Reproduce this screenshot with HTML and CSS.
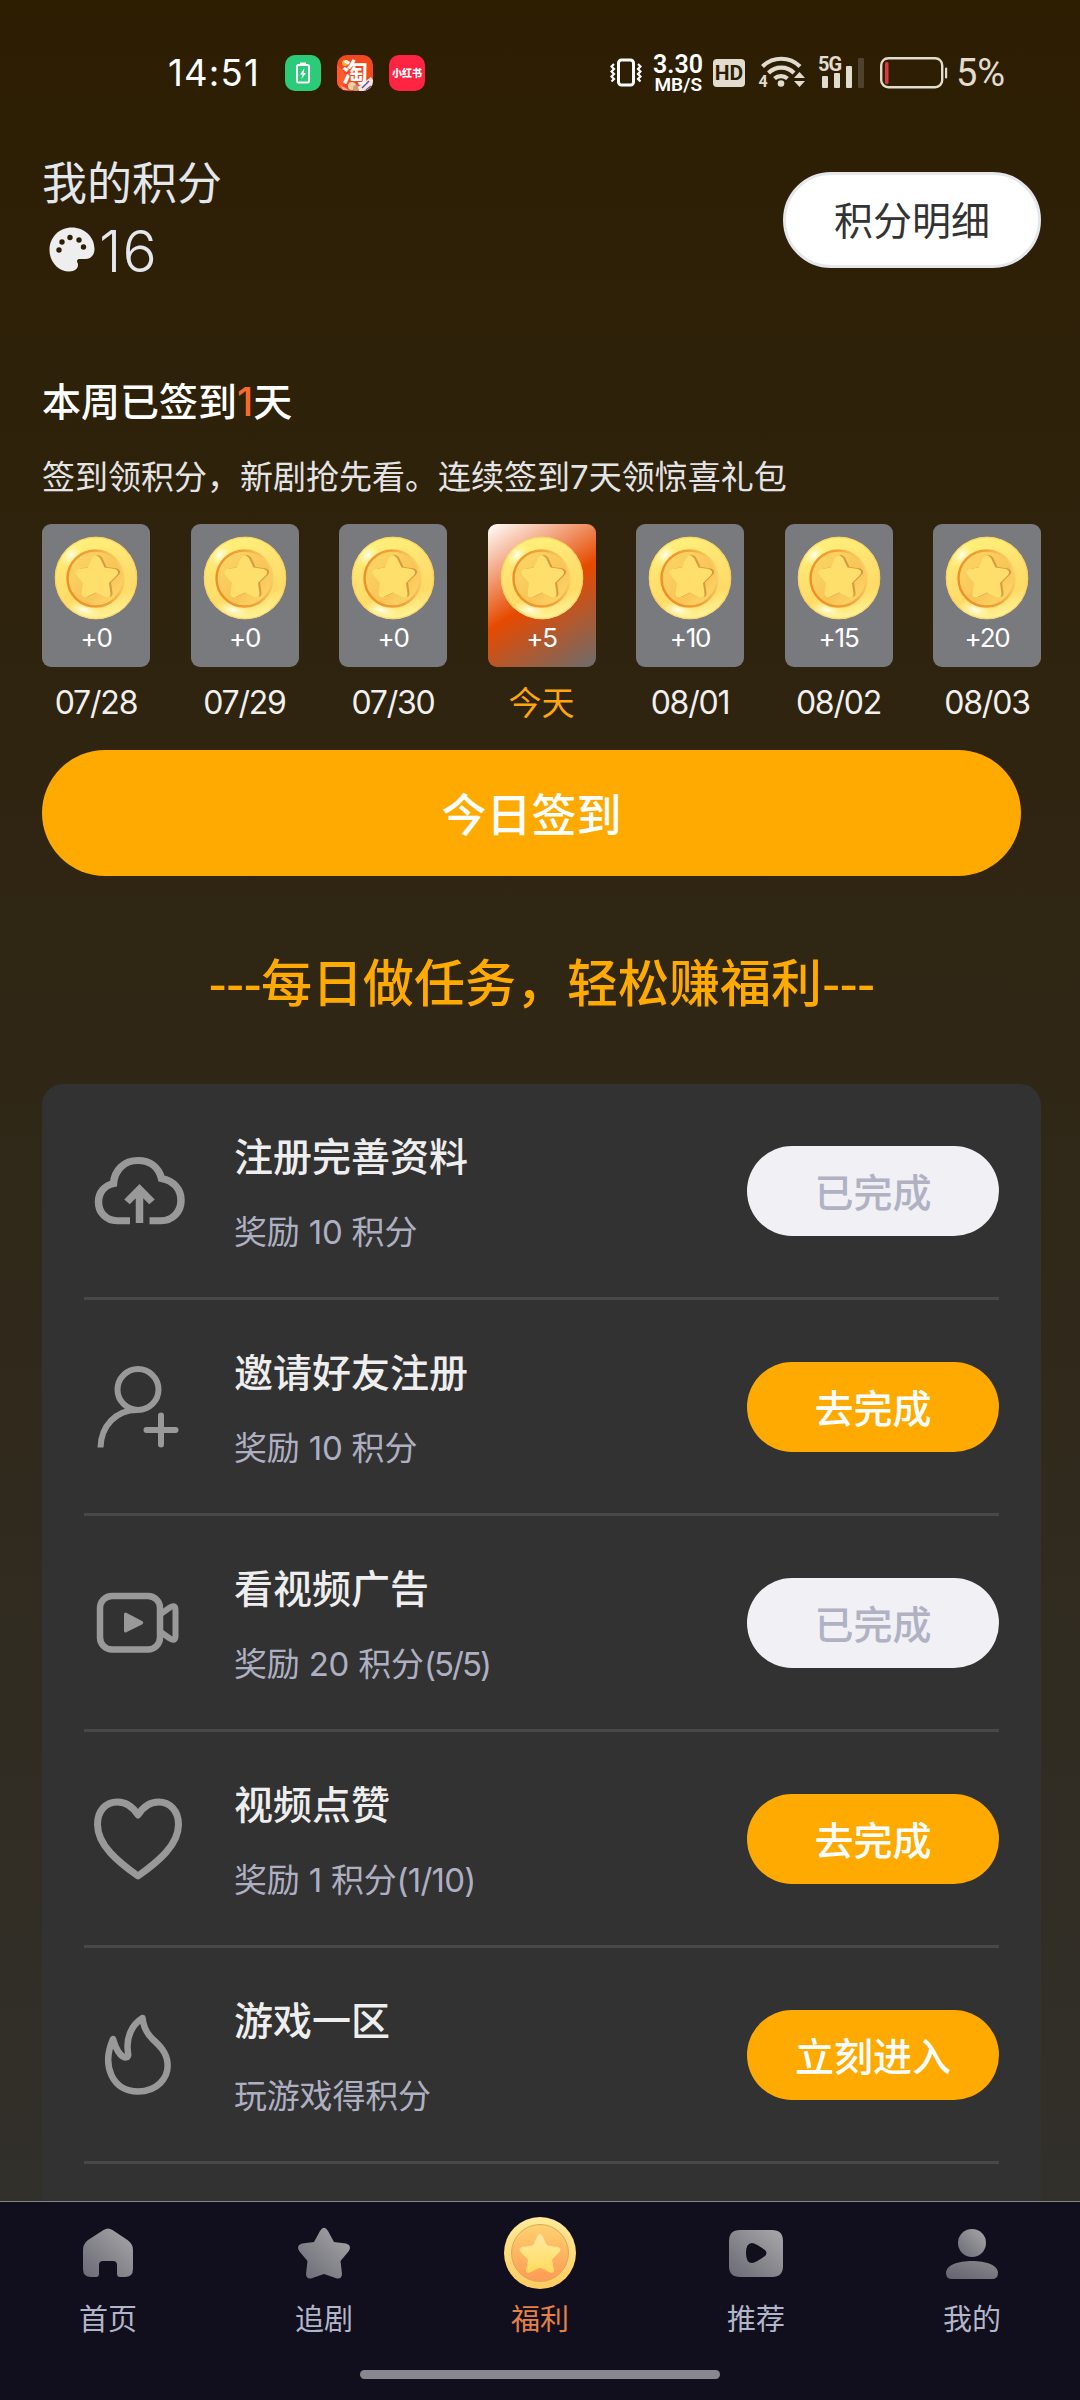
FILE: index.html
```html
<!DOCTYPE html>
<html lang="zh-CN">
<head>
<meta charset="utf-8">
<title>福利</title>
<link rel="stylesheet" href="styles.css">
</head>
<body>
<svg class="defs" width="0" height="0">
  <defs>
    <linearGradient id="rim" x1="0.3" y1="0" x2="0.6" y2="1">
      <stop offset="0" stop-color="#fff27a"/><stop offset="0.45" stop-color="#ffe070"/><stop offset="0.75" stop-color="#ffdb66"/><stop offset="1" stop-color="#fff59a"/>
    </linearGradient>
    <linearGradient id="well" x1="0" y1="0" x2="1" y2="1">
      <stop offset="0" stop-color="#fbd968"/><stop offset="0.6" stop-color="#f8c456"/><stop offset="1" stop-color="#ffdd70"/>
    </linearGradient>
    <linearGradient id="wellEdge" x1="0" y1="0.6" x2="1" y2="0.3">
      <stop offset="0" stop-color="#ee8f25"/><stop offset="0.6" stop-color="#f0a43a"/><stop offset="1" stop-color="#fcd468"/>
    </linearGradient>
    <radialGradient id="shine"><stop offset="0" stop-color="#fffff0"/><stop offset="1" stop-color="#fff9a0" stop-opacity="0"/></radialGradient>
    <clipPath id="coinClip"><circle cx="42" cy="42" r="41.500"/></clipPath>
    <linearGradient id="gray" x1="1" y1="0" x2="0" y2="1">
      <stop offset="0" stop-color="#a8a8ac"/><stop offset="0.5" stop-color="#88888e"/><stop offset="1" stop-color="#6b6a77"/>
    </linearGradient>
    <linearGradient id="grayBody" x1="1" y1="0" x2="0" y2="1">
      <stop offset="0" stop-color="#88888c"/><stop offset="1" stop-color="#64636f"/>
    </linearGradient>
    <linearGradient id="navRim" x1="0" y1="0" x2="0" y2="1"><stop offset="0" stop-color="#ffeb9a"/><stop offset="1" stop-color="#ffcb60"/></linearGradient>
    <linearGradient id="navWell" x1="0" y1="0" x2="0" y2="1"><stop offset="0" stop-color="#ffd16e"/><stop offset="1" stop-color="#ff9a55"/></linearGradient>
    <linearGradient id="navStar" x1="0" y1="0" x2="0" y2="1"><stop offset="0" stop-color="#ffe9a5"/><stop offset="1" stop-color="#ffdc5c"/></linearGradient>
    <symbol id="coin" viewBox="0 0 84 84">
      <g clip-path="url(#coinClip)">
        <circle cx="42" cy="42" r="41.500" fill="url(#rim)"/>
        <circle cx="42" cy="42" r="40.800" fill="none" stroke="#f3bf55" stroke-opacity="0.5" stroke-width="1.400"/>
        <ellipse cx="17" cy="19" rx="13" ry="9" transform="rotate(-45 17 19)" fill="url(#shine)"/>
        <ellipse cx="30" cy="74" rx="18" ry="8" transform="rotate(14 30 74)" fill="url(#shine)"/>
      </g>
      <circle cx="41.500" cy="42.500" r="28" fill="url(#well)" stroke="url(#wellEdge)" stroke-width="2.400"/>
      <path d="M38 22q4-5 8 0l4.500 9.500 10.500 1.500q5 2 2 6l-8 8 1.500 10.500q0 5-5 3.500L42 56.500 32.500 61q-5 1-5-3.500L29 47l-6.500-8q-3-4 2-6l9.500-1.500z" transform="translate(2 -0.500)" fill="#c58634" opacity="0.7"/>
      <path d="M38 22q4-5 8 0l4.500 9.500 10.500 1.500q5 2 2 6l-8 8 1.500 10.500q0 5-5 3.500L42 56.500 32.500 61q-5 1-5-3.500L29 47l-6.500-8q-3-4 2-6l9.500-1.500z" fill="#ffdf6c"/>
    </symbol>
  </defs>
</svg>

<div class="screen">
  <header class="status">
    <div class="status-left">
      <span class="clock">14:51</span>
      <span class="app app-green"><svg width="36" height="36" viewBox="0 0 36 36"><rect x="12" y="10" width="12" height="17.500" rx="1.500" fill="none" stroke="#fff" stroke-width="2"/><path d="M15 7.500h6v2h-6z" fill="#fff"/><path d="M19.500 13l-4.500 6.500h2.500L16.500 24l4.500-6h-2.500z" fill="#fff"/></svg></span>
      <span class="app app-tao"><svg width="36" height="36" viewBox="0 0 36 36"><path d="M0 10q10 6 9 18L0 36z" fill="#ff5a2a"/><circle cx="8" cy="8" r="3" fill="#ffb52e"/><path d="M3 30l9 5H6z" fill="#ff9ea5"/><circle cx="15" cy="31" r="4" fill="#e8d2ab"/><circle cx="19" cy="33" r="3" fill="#c99c7a"/><path d="M21 32L34 22l2 3v11H22z" fill="#f7e5e0"/><path d="M25 33l7-7M29 35l5-4" stroke="#55a" stroke-width="1.500"/></svg><b>淘</b></span>
      <span class="app app-red"><b>小红书</b></span>
    </div>
    <div class="status-right">
      <svg class="vibrate" width="32" height="30" viewBox="0 0 32 30"><rect x="8.500" y="2" width="15" height="25" rx="3" fill="none" stroke="#fff" stroke-width="3"/><path d="M4 6L1.500 8.500 4 11 1.500 13.500 4 16 1.500 18.500 4 21 1.500 23.500M28 6l2.500 2.500L28 11l2.500 2.500L28 16l2.500 2.500L28 21l2.500 2.500" fill="none" stroke="#fff" stroke-width="2.200"/></svg>
      <span class="speed"><b>3.30</b><i>MB/S</i></span>
      <span class="hd">HD</span>
      <svg class="wifi" width="48" height="36" viewBox="0 0 48 36"><g fill="none" stroke="#e2dccf" stroke-width="4.200"><path d="M4.500 13.500a26.500 26.500 0 0 1 37.500 0"/><path d="M10.500 20a18 18 0 0 1 25.500 0"/><path d="M16.500 25.500a9.800 9.800 0 0 1 13 0"/></g><circle cx="23" cy="30.500" r="3.300" fill="#e2dccf"/><path d="M36 25l5.500-6 5.500 6zM36 28l5.500 6 5.500-6z" fill="#e2dccf"/><text x="0.500" y="34" class="wifi-n">4</text></svg>
      <svg class="signal" width="48" height="34" viewBox="0 0 48 34"><g fill="#e2dccf"><rect x="4" y="21" width="6" height="12" rx="1"/><rect x="16" y="18" width="6" height="15" rx="1"/><rect x="28" y="11" width="6" height="22" rx="1"/></g><rect x="40" y="3" width="6" height="30" rx="1" fill="#4f4330"/><text x="0" y="16" class="net">5G</text></svg>
      <svg class="battery" width="68" height="32" viewBox="0 0 68 32"><rect x="1.200" y="1.200" width="61" height="29" rx="7" fill="none" stroke="#e2dccf" stroke-width="2.400"/><rect x="5" y="5" width="3.500" height="22" rx="1.500" fill="#e0383f"/><rect x="65" y="10.500" width="2.200" height="11" rx="1" fill="#e2dccf"/></svg>
      <span class="percent">5%</span>
    </div>
  </header>

  <section class="points">
    <div class="points-info">
      <div class="points-label">我的积分</div>
      <div class="points-value">
        <svg width="46" height="46" viewBox="0 0 46 46"><path d="M23 .5C10 .5.500 10.500.500 23S10 44.500 20 44.500c6 0 9-3 9-6.500 0-2-1-2.500-1-4 0-1.500 1.500-2 3-2h5c6 0 9.500-4 9.500-10C45.500 9.500 35 .5 23 .5z" fill="#eee"/><g fill="#2d1f06"><circle cx="10" cy="23" r="2.700"/><circle cx="13" cy="15" r="2.700"/><circle cx="21" cy="10.500" r="2.700"/><circle cx="30" cy="13" r="2.700"/><circle cx="34.500" cy="20" r="2.700"/></g></svg>
        <span>16</span>
      </div>
    </div>
    <button class="detail">积分明细</button>
  </section>

  <section class="checkin">
    <h2>本周已签到<em>1</em>天</h2>
    <p class="hint">签到领积分，新剧抢先看。连续签到7天领惊喜礼包</p>
    <ol class="days">
      <li><div class="day"><svg><use href="#coin"/></svg><span>+0</span></div><time>07/28</time></li>
      <li><div class="day"><svg><use href="#coin"/></svg><span>+0</span></div><time>07/29</time></li>
      <li><div class="day"><svg><use href="#coin"/></svg><span>+0</span></div><time>07/30</time></li>
      <li class="today"><div class="day"><svg><use href="#coin"/></svg><span>+5</span></div><time>今天</time></li>
      <li><div class="day"><svg><use href="#coin"/></svg><span>+10</span></div><time>08/01</time></li>
      <li><div class="day"><svg><use href="#coin"/></svg><span>+15</span></div><time>08/02</time></li>
      <li><div class="day"><svg><use href="#coin"/></svg><span>+20</span></div><time>08/03</time></li>
    </ol>
    <button class="sign">今日签到</button>
  </section>

  <h3 class="slogan"><span>---</span>每日做任务，轻松赚福利<span>---</span></h3>

  <section class="tasks">
    <article class="task">
      <svg class="task-icon" viewBox="0 0 96 96"><path transform="translate(1 2) scale(1 0.940)" d="M38 79.500H25c-11 0-18.500-9-18.500-20 0-10 6-17.500 15-19.500C22.500 25.500 32 15.500 46 15.500c12 0 20.500 7 23.500 19C82 37 89 46 89 58c0 12-8.500 21.500-20 21.500H57.500M47.500 82V48M35 59.500L47.500 46 60 59.500" fill="none" stroke-width="7.500"/></svg>
      <div class="task-text"><h4>注册完善资料</h4><p>奖励 10 积分</p></div>
      <button class="done">已完成</button>
    </article>
    <article class="task">
      <svg class="task-icon" viewBox="0 0 96 96"><circle cx="47" cy="29.500" r="20.500" fill="none" stroke-width="6"/><path d="M9.500 87.500C10 66 25 50 46 50" fill="none" stroke-width="6"/><path d="M55.500 70H84.500M70 55.500V84.500" fill="none" stroke-width="6" stroke-linecap="round"/></svg>
      <div class="task-text"><h4>邀请好友注册</h4><p>奖励 10 积分</p></div>
      <button>去完成</button>
    </article>
    <article class="task">
      <svg class="task-icon" viewBox="0 0 96 96"><rect x="9" y="20" width="60" height="53.500" rx="12" fill="none" stroke-width="6.500"/><path d="M69 38.500l9.500-6.800q6-4 6 2.500v25.600q0 6.500-6 2.500L69 55.500" fill="none" stroke-width="6"/><path d="M33 38.500v16q0 3 2.800 1.500L51 48.500q2.500-1.800 0-3.500L35.800 37Q33 35.500 33 38.500z" class="solid"/></svg>
      <div class="task-text"><h4>看视频广告</h4><p>奖励 20 积分<span class="count">(5/5)</span></p></div>
      <button class="done">已完成</button>
    </article>
    <article class="task">
      <svg class="task-icon" viewBox="0 0 96 96"><path transform="translate(0 -2)" d="M47 25C42 17 35 12 26.500 12 14.500 12 6.500 21 6.500 34.500 6.500 55 27 72 47 86 67 72 87.500 55 87.500 34.500 87.500 21 79 12 67.500 12 59 12 52 17 47 25z" fill="none" stroke-width="7" stroke-linejoin="round"/></svg>
      <div class="task-text"><h4>视频点赞</h4><p>奖励 1 积分<span class="count-wide">(1/10)</span></p></div>
      <button>去完成</button>
    </article>
    <article class="task">
      <svg class="task-icon" viewBox="0 0 96 96"><path transform="translate(0 -1)" d="M51.500 11C42 17 34.500 29 37 45.500 38.500 52 33 51.500 29 47 25.500 43 23.500 37 22 32 10 60 22 84 47 84.500 66 84.500 78 71 76.500 56 75.500 45 68 38 62 32.500 55 26 52.500 20 51.500 11z" fill="none" stroke-width="6.500" stroke-linejoin="round"/></svg>
      <div class="task-text"><h4>游戏一区</h4><p>玩游戏得积分</p></div>
      <button>立刻进入</button>
    </article>
  </section>

  <nav class="tabs">
    <a><svg viewBox="0 0 72 72"><path d="M31.500 13q4.500-3 9 0l15 10q5.500 4 5.500 10V52q0 8-8 8h-5q-3 0-3-3V48q0-4-4-4H31q-4 0-4 4v9q0 3-3 3h-5q-8 0-8-8V33q0-6 5-10z" fill="url(#gray)"/></svg>首页</a>
    <a><svg viewBox="0 0 72 72"><path d="M32 14q4-6.500 8 0l6 11 12 1.500q6.500 2 2.500 8L52.500 44l1.500 13q-.500 6-6.500 4L36 57l-11.500 4q-6 2-6.500-4l1.500-13-8-9.500q-4-6 2.500-8L26 25z" fill="url(#gray)"/></svg>追剧</a>
    <a class="active"><svg viewBox="0 0 72 72"><circle cx="36" cy="36" r="36" fill="url(#navRim)"/><circle cx="36" cy="36" r="28.500" fill="url(#navWell)" stroke="#d9ac58" stroke-width="1"/><path d="M33.500 19q2.500-4 5 0l4.500 9.500 11 1.500q4 1.500 1.500 5L48 42.500l2 11q-.500 3.500-4 2L36 50.500 26 55.500q-3.500 1.500-4-2l2-11-7.500-7.500q-2.500-3.500 1.500-5L29 28.500z" fill="url(#navStar)"/></svg>福利</a>
    <a><svg viewBox="0 0 72 72"><path fill-rule="evenodd" d="M20 13h32q11 0 11 11v25q0 11-11 11H20q-11 0-11-11V24q0-11 11-11zM32 26q-6 0-6 10t6 10q4-.500 13-7 3-3 0-6Q36 26.500 32 26z" fill="url(#gray)"/></svg>推荐</a>
    <a><svg viewBox="0 0 72 72"><ellipse cx="36" cy="26" rx="14" ry="14" fill="url(#gray)"/><path d="M36 44c14 0 26 4 26 12q0 6-6 6H16q-6 0-6-6c0-8 12-12 26-12z" fill="url(#grayBody)"/></svg>我的</a>
  </nav>
  <div class="homebar"><span></span></div>
</div>
</body>
</html>
```
FILE: styles.css
```css
* { box-sizing: border-box; margin: 0; padding: 0; }
body {
  width: 1080px; height: 2400px; overflow: hidden;
  font-family: Inter, "Noto Sans CJK SC", sans-serif;
  color: #fff;
}
button { border: 0; font: inherit; display: block; }
.defs { position: absolute; }
.screen {
  width: 1080px; height: 2400px; display: flex; flex-direction: column;
  background: linear-gradient(#2d1e02, #32302b 2200px);
}

.status { height: 146px; padding: 0 72px 0 168px; display: flex; justify-content: space-between; align-items: center; flex: none; }
.status-left, .status-right { display: flex; align-items: center; }
.clock { width: 117px; font-size: 36.500px; line-height: 36px; letter-spacing: 1.200px; }
.app { width: 36px; height: 36px; margin-right: 16px; border-radius: 10px; display: grid; place-items: center; }
.app svg { border-radius: 10px; }
.app > * { grid-area: 1 / 1; }
.app b { font-family: "Noto Sans CJK SC", sans-serif; }
.app-green { background: #2ccb7a; }
.app-tao { background: #f2481e; }
.app-tao b { font-size: 26px; line-height: 28px; margin-bottom: 5px; }
.app-red { background: #ff2442; }
.app-red b { font-size: 10px; line-height: 36px; font-weight: 900; white-space: nowrap; }
.vibrate { margin-right: 11px; }
.speed { width: 49px; margin-right: 11px; text-align: right; }
.speed b, .speed i { display: block; font-style: normal; font-family: Roboto, sans-serif; white-space: nowrap; }
.speed b { font-size: 25px; line-height: 23px; font-weight: 600; }
.speed i { font-size: 19px; line-height: 18px; font-weight: 600; }
.hd { width: 32px; height: 28px; border-radius: 4px; background: #e2dccf; color: #2d1e02; font: 700 21px/28px Roboto, sans-serif; text-align: center; margin-right: 13px; }
.wifi { margin: -4px 12px 0 0; overflow: visible; }
.wifi-n { font: 700 16px Roboto, sans-serif; fill: #e2dccf; }
.net { font: 700 20px Roboto, sans-serif; letter-spacing: -1px; fill: #e2dccf; }
.signal { margin: -3px 14px 0 0; overflow: visible; }
.battery { margin-right: 8px; }
.percent { width: 52px; font-family: Roboto, sans-serif; font-size: 38px; line-height: 36px; color: #e2dccf; white-space: nowrap; }

.points { height: 226px; padding: 5px 39px 0 42px; display: flex; justify-content: space-between; flex: none; }
.points-label { font-size: 45px; line-height: 66px; color: #e4e7ed; }
.points-value { display: flex; align-items: center; height: 70px; padding-left: 7px; font-size: 57px; font-weight: 350; color: #e4e7ed; line-height: 70px; letter-spacing: 1px; }
.points-value svg { margin: -5px 4px 0 0; }
.detail { width: 258px; height: 96px; margin-top: 21px; padding-top: 2px; border: 3px solid #e4e7ed; border-radius: 48px; background: #fff; color: #333; font-size: 39px; line-height: 58px; }

.checkin { padding: 1px 39px 0 42px; flex: none; }
.checkin h2 { font-size: 39px; line-height: 58px; font-weight: 500; }
.checkin em { font-style: normal; color: #fa6a2c; }
.hint { margin-top: 22px; font-size: 33px; line-height: 48px; color: #e4e4e6; white-space: nowrap; }
.days { margin-top: 23px; display: flex; justify-content: space-between; list-style: none; }
.days li { width: 108px; }
.day { height: 143px; border-radius: 9px; background: #797a7e; display: flex; flex-direction: column; align-items: center; padding-top: 12px; }
.day svg { width: 84px; height: 84px; flex: none; }
.day span { font-size: 26px; line-height: 36px; letter-spacing: -1.200px; }
.days time { display: block; margin-top: 12px; text-align: center; font-size: 32px; line-height: 48px; color: #f2f0ee; letter-spacing: -1.200px; white-space: nowrap; }
.today .day { background: linear-gradient(147deg, #fff 0%, #e64a00 50%, #6c6c6c 100%); }
.days .today time { color: #ffa60c; font-size: 33px; letter-spacing: 0; }
.sign { width: 979px; height: 126px; margin-top: 23px; padding-top: 5px; border-radius: 63px; background: #ffaa00; color: #fff; font-size: 45px; font-weight: 500; line-height: 66px; }

.slogan { height: 208px; flex: none; text-align: center; font-family: "Noto Sans CJK SC", sans-serif; font-size: 51px; line-height: 208px; font-weight: 500; color: #ffaa00; padding-left: 3px; white-space: nowrap; }
.slogan span { letter-spacing: -0.700px; }

.tasks { flex: 1; min-height: 0; margin: 0 39px 0 42px; padding: 0 42px; background: #323232; border-radius: 21px 21px 0 0; overflow: hidden; }
.task { height: 216px; border-bottom: 3px solid #484848; display: flex; }
.task-icon { width: 96px; height: 96px; margin: 60px 0 0 7px; stroke: #999; flex: none; }
.solid { fill: #999; stroke: none; }
.task-text { margin-left: 47px; flex: 1; padding-top: 44px; }
.task h4 { font-size: 39px; line-height: 58px; font-weight: 500; color: #eee; }
.task p { margin-top: 22px; font-size: 33px; line-height: 48px; color: #aeb0c2; letter-spacing: -0.200px; white-space: nowrap; }
.count { letter-spacing: -2px; }
.count-wide { letter-spacing: -0.800px; }
.task button { width: 252px; height: 90px; margin-top: 62px; padding-top: 4px; border-radius: 45px; background: #ffaa00; color: #fff; font-size: 39px; line-height: 58px; font-weight: 500; }
.task button.done { background: #f0f0f5; color: #b0b2c4; }

.tabs { height: 150px; flex: none; display: flex; background: #110f1d; border-top: 1px solid #858582; padding-top: 15px; }
.tabs a { flex: 1; display: flex; flex-direction: column; align-items: center; font-size: 29px; line-height: 42px; color: #b2b6c8; }
.tabs svg { width: 72px; height: 72px; margin-bottom: 10px; }
.tabs .active { color: #e2824a; }
.homebar { height: 49px; flex: none; background: #110f1d; padding-top: 19px; }
.homebar span { display: block; width: 360px; height: 9px; border-radius: 5px; background: #88878f; margin: 0 auto; }
```
